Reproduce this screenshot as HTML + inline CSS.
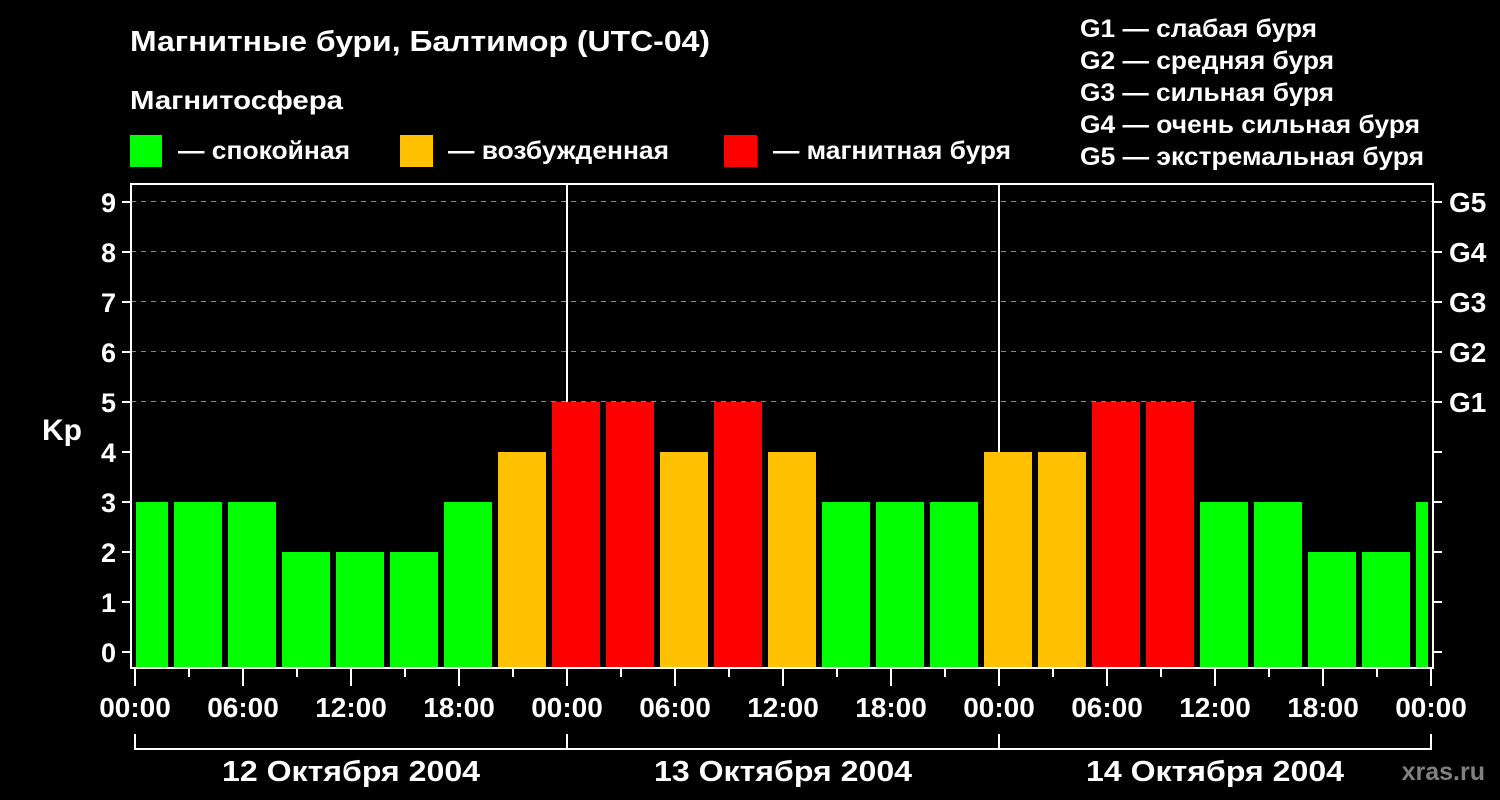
<!DOCTYPE html>
<html><head><meta charset="utf-8"><style>
html,body{margin:0;padding:0;background:#000;}
svg{display:block;}
text{font-family:"Liberation Sans",sans-serif;font-weight:bold;fill:#fff;}
</style></head><body>
<svg width="1500" height="800" viewBox="0 0 1500 800" xmlns="http://www.w3.org/2000/svg">
<rect width="1500" height="800" fill="#000"/>
<text x="130" y="51" font-size="29" textLength="580" lengthAdjust="spacingAndGlyphs">Магнитные бури, Балтимор (UTC-04)</text>
<text x="130" y="109" font-size="26" textLength="213" lengthAdjust="spacingAndGlyphs">Магнитосфера</text>
<rect x="130" y="135" width="32" height="32" fill="#00ff00"/>
<text x="178" y="159" font-size="25" textLength="172" lengthAdjust="spacingAndGlyphs">— спокойная</text>
<rect x="400" y="135" width="33" height="32" fill="#ffc000"/>
<text x="448" y="159" font-size="25" textLength="221" lengthAdjust="spacingAndGlyphs">— возбужденная</text>
<rect x="724" y="135" width="33" height="32" fill="#ff0000"/>
<text x="773" y="159" font-size="25" textLength="238" lengthAdjust="spacingAndGlyphs">— магнитная буря</text>
<g font-size="25">
<text x="1080" y="37" textLength="237" lengthAdjust="spacingAndGlyphs">G1 — слабая буря</text>
<text x="1080" y="69" textLength="254" lengthAdjust="spacingAndGlyphs">G2 — средняя буря</text>
<text x="1080" y="101" textLength="254" lengthAdjust="spacingAndGlyphs">G3 — сильная буря</text>
<text x="1080" y="133" textLength="340" lengthAdjust="spacingAndGlyphs">G4 — очень сильная буря</text>
<text x="1080" y="165" textLength="344" lengthAdjust="spacingAndGlyphs">G5 — экстремальная буря</text>
</g>
<g stroke="#888" stroke-width="1" stroke-dasharray="5,5">
<line x1="131" y1="201.5" x2="1433" y2="201.5"/>
<line x1="131" y1="251.5" x2="1433" y2="251.5"/>
<line x1="131" y1="301.5" x2="1433" y2="301.5"/>
<line x1="131" y1="351.5" x2="1433" y2="351.5"/>
<line x1="131" y1="401.5" x2="1433" y2="401.5"/>
</g>
<g stroke="#fff" stroke-width="2">
<line x1="567" y1="183" x2="567" y2="668"/>
<line x1="999" y1="183" x2="999" y2="668"/>
</g>
<g>
<rect x="136" y="502" width="32" height="165" fill="#00ff00"/>
<rect x="174" y="502" width="48" height="165" fill="#00ff00"/>
<rect x="228" y="502" width="48" height="165" fill="#00ff00"/>
<rect x="282" y="552" width="48" height="115" fill="#00ff00"/>
<rect x="336" y="552" width="48" height="115" fill="#00ff00"/>
<rect x="390" y="552" width="48" height="115" fill="#00ff00"/>
<rect x="444" y="502" width="48" height="165" fill="#00ff00"/>
<rect x="498" y="452" width="48" height="215" fill="#ffc000"/>
<rect x="552" y="402" width="48" height="265" fill="#ff0000"/>
<rect x="606" y="402" width="48" height="265" fill="#ff0000"/>
<rect x="660" y="452" width="48" height="215" fill="#ffc000"/>
<rect x="714" y="402" width="48" height="265" fill="#ff0000"/>
<rect x="768" y="452" width="48" height="215" fill="#ffc000"/>
<rect x="822" y="502" width="48" height="165" fill="#00ff00"/>
<rect x="876" y="502" width="48" height="165" fill="#00ff00"/>
<rect x="930" y="502" width="48" height="165" fill="#00ff00"/>
<rect x="984" y="452" width="48" height="215" fill="#ffc000"/>
<rect x="1038" y="452" width="48" height="215" fill="#ffc000"/>
<rect x="1092" y="402" width="48" height="265" fill="#ff0000"/>
<rect x="1146" y="402" width="48" height="265" fill="#ff0000"/>
<rect x="1200" y="502" width="48" height="165" fill="#00ff00"/>
<rect x="1254" y="502" width="48" height="165" fill="#00ff00"/>
<rect x="1308" y="552" width="48" height="115" fill="#00ff00"/>
<rect x="1362" y="552" width="48" height="115" fill="#00ff00"/>
<rect x="1416" y="502" width="12" height="165" fill="#00ff00"/>
</g>
<rect x="131" y="184" width="1302" height="484" stroke="#fff" stroke-width="2" fill="none"/>
<path stroke="#fff" stroke-width="2" fill="none" d="M122 652H131M122 602H131M122 552H131M122 502H131M122 452H131M122 402H131M122 352H131M122 302H131M122 252H131M122 202H131
M1433 652H1442M1433 602H1442M1433 552H1442M1433 502H1442M1433 452H1442M1433 402H1442M1433 352H1442M1433 302H1442M1433 252H1442M1433 202H1442
M135 668V686M189 668V677M243 668V686M297 668V677M351 668V686M405 668V677M459 668V686M513 668V677M567 668V686M621 668V677M675 668V686M729 668V677M783 668V686M837 668V677M891 668V686M945 668V677M999 668V686M1053 668V677M1107 668V686M1161 668V677M1215 668V686M1269 668V677M1323 668V686M1377 668V677M1431 668V686"/>
<g font-size="27" text-anchor="end">
<text x="116" y="662">0</text><text x="116" y="612">1</text><text x="116" y="562">2</text><text x="116" y="512">3</text><text x="116" y="462">4</text><text x="116" y="412">5</text><text x="116" y="362">6</text><text x="116" y="312">7</text><text x="116" y="262">8</text><text x="116" y="212">9</text>
</g>
<g font-size="28">
<text x="1449" y="212">G5</text><text x="1449" y="262">G4</text><text x="1449" y="312">G3</text><text x="1449" y="362">G2</text><text x="1449" y="412">G1</text>
</g>
<text x="42" y="440" font-size="30">Kp</text>
<g font-size="28" text-anchor="middle">
<text x="135" y="717">00:00</text><text x="243" y="717">06:00</text><text x="351" y="717">12:00</text><text x="459" y="717">18:00</text>
<text x="567" y="717">00:00</text><text x="675" y="717">06:00</text><text x="783" y="717">12:00</text><text x="891" y="717">18:00</text>
<text x="999" y="717">00:00</text><text x="1107" y="717">06:00</text><text x="1215" y="717">12:00</text><text x="1323" y="717">18:00</text>
<text x="1431" y="717">00:00</text>
</g>
<g stroke="#fff" stroke-width="2" fill="none">
<polyline points="135,734 135,749 1431,749 1431,734"/>
<line x1="567" y1="734" x2="567" y2="749"/>
<line x1="999" y1="734" x2="999" y2="749"/>
</g>
<g font-size="29" text-anchor="middle">
<text x="351" y="781" textLength="258" lengthAdjust="spacingAndGlyphs">12 Октября 2004</text>
<text x="783" y="781" textLength="258" lengthAdjust="spacingAndGlyphs">13 Октября 2004</text>
<text x="1215" y="781" textLength="258" lengthAdjust="spacingAndGlyphs">14 Октября 2004</text>
</g>
<text x="1485" y="780" font-size="25" text-anchor="end" style="fill:#808080">xras.ru</text>
</svg>
</body></html>
